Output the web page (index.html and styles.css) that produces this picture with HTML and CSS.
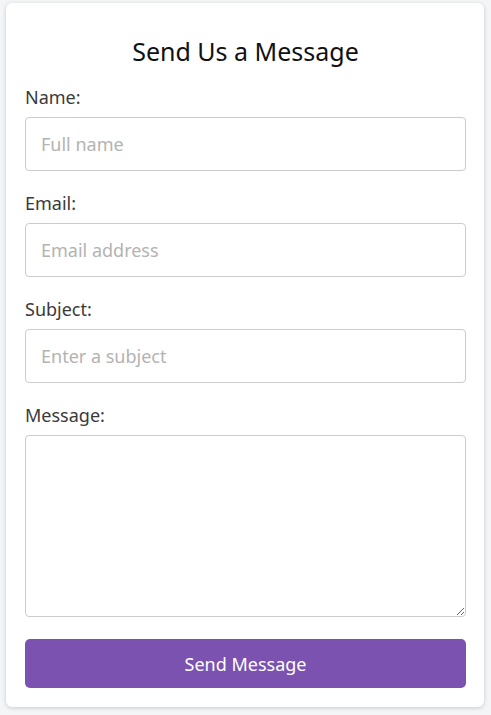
FILE: index.html
```html
<!DOCTYPE html>
<html lang="en">
<head>
<meta charset="utf-8">
<title>Contact</title>
<link rel="stylesheet" href="styles.css">
</head>
<body>
<div class="card">
  <h2 class="title">Send Us a Message</h2>
  <form class="form">
    <div class="group">
      <label class="label" for="name">Name:</label>
      <input class="field" id="name" type="text" placeholder="Full name">
    </div>
    <div class="group">
      <label class="label" for="email">Email:</label>
      <input class="field" id="email" type="email" placeholder="Email address">
    </div>
    <div class="group">
      <label class="label" for="subject">Subject:</label>
      <input class="field" id="subject" type="text" placeholder="Enter a subject">
    </div>
    <div class="group">
      <label class="label" for="message">Message:</label>
      <textarea class="field area" id="message"></textarea>
    </div>
    <button class="btn" type="button">Send Message</button>
  </form>
</div>
</body>
</html>
```
FILE: styles.css
```css
html, body {
  margin: 0;
  background: #f4f5f7;
}
body {
  padding: 3px 7px 8px 6px;
  font-family: "Noto Sans", "Open Sans", sans-serif;
  color: #333;
}
.card {
  background: #fff;
  border-radius: 6px;
  box-shadow: 0 1px 4px rgba(0,0,0,0.18);
  padding: 31px 18px 19px 19px;
}
.title {
  margin: 0 0 17px;
  font-size: 25px;
  font-weight: 400;
  line-height: 34px;
  text-align: center;
  color: #111;
}
.form {
  display: flex;
  flex-direction: column;
}
.group {
  display: flex;
  flex-direction: column;
  margin-bottom: 20px;
}
.group:last-of-type {
  margin-bottom: 22px;
}
.label {
  font-size: 18px;
  line-height: 24px;
  margin-bottom: 8px;
  color: #3a3a3a;
}
.field {
  box-sizing: border-box;
  height: 54px;
  padding: 0 15px;
  border: 1px solid #ccc;
  border-radius: 4px;
  font-family: inherit;
  font-size: 18px;
  color: #333;
  background: #fff;
  margin: 0;
}
.field::placeholder {
  color: #b3b3b3;
}
.area {
  height: 182px;
  padding: 12px 15px;
  resize: vertical;
}
.btn {
  height: 49px;
  border: 0;
  border-radius: 5px;
  background: #7b52b0;
  color: #fff;
  font-family: inherit;
  font-size: 18px;
  cursor: pointer;
}
```
